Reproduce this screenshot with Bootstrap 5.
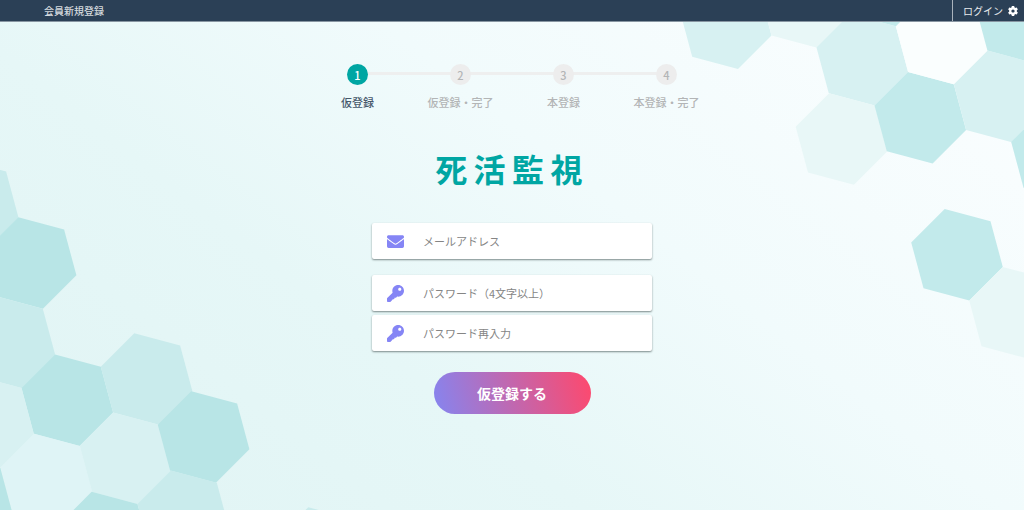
<!DOCTYPE html>
<html lang="ja">
<head>
<meta charset="utf-8">
<meta name="viewport" content="width=device-width, initial-scale=1">
<title>会員新規登録 | 死活監視</title>
<link href="https://cdn.jsdelivr.net/npm/bootstrap@5.3.0/dist/css/bootstrap.min.css" rel="stylesheet">
<style>
  :root { --teal: #00a6a3; --navy: #2b4056; --violet: #8585f5; }
  body {
    font-family: "Noto Sans CJK JP", sans-serif;
    font-size: 11px;
    line-height: 16px;
    background: linear-gradient(38deg, #e0f4f4 0%, #e6f7f7 35%, #f1fbfc 60%, #fcfeff 100%) #f1fbfc;
  }
  .topbar { background: var(--navy); border-bottom: 1px solid #8896a2; font-size: 10px; height: 22px; }
  .topbar h1 { font-size: 10px; line-height: 22px; padding-left: 44px; color: #d5dade; }
  .login-link { color: #e8ebee; border-left: 1px solid #aab3bc; padding: 0 6px 0 10px; gap: 5px; }
  .honeycomb { pointer-events: none; }
  .tone-a { fill: #b8e5e6; } .tone-b { fill: #c9ebec; } .tone-c { fill: #d8f1f2; } .tone-d { fill: #dff4f6; }
  .tone-e { fill: #c2eaeb; } .tone-f { fill: #d7f1f2; } .tone-g { fill: #e8f7f7; } .tone-h { fill: #fafefe; }
  .steps { max-width: 412px; padding-top: 42px; color: #b3b5b6; font-weight: 500; }
  .steps li { flex: 1 1 0; }
  .steps li + li::before {
    content: ""; position: absolute; top: 8px; right: 50%; width: 100%; height: 3px; background: #eeefef; z-index: -1;
  }
  .step-dot { width: 21px; height: 21px; background: #ededed; line-height: 22px; margin-bottom: 9px; }
  .steps .current .step-dot { background: var(--teal); color: #fff; }
  .steps .current { color: #46586b; }
  .brand-title { font-size: 32px; line-height: 40px; letter-spacing: .2em; color: var(--teal); padding-top: 38px; margin-bottom: 35px; }
  .signup { max-width: 280px; }
  .field { height: 36px; border-radius: 2px; box-shadow: 0 1px 2px #7b8a8a; padding-left: 15px; background: #fff; }
  .field svg { fill: var(--violet); flex: none; }
  .field .form-control { font-size: 11px; line-height: 16px; padding: 0 8px 0 19px; color: #444; }
  .field .form-control::placeholder { color: #858585; }
  .btn-signup {
    width: 157px; height: 42px; font-size: 14px; color: #fff; margin-top: 21px;
    background: linear-gradient(75deg, #8585f0, #ff486c);
  }
  .btn-signup:hover { color: #fff; filter: brightness(1.05); }
</style>
</head>
<body class="min-vh-100 position-relative overflow-x-hidden">
<svg width="0" height="0" class="position-absolute" aria-hidden="true">
  <defs><path id="hex" d="M-12.3-45.8 33.5-33.5 45.8 12.3 12.3 45.8-33.5 33.5-45.8-12.3z"/></defs>
</svg>
<svg class="honeycomb position-absolute bottom-0 start-0" width="360" height="340" viewBox="0 170 360 340" aria-hidden="true">
  <use href="#hex" class="tone-b" x="-27.4" y="205"/>
  <use href="#hex" class="tone-a" x="30.6" y="263"/>
  <use href="#hex" class="tone-b" x="9.3" y="342.3"/>
  <use href="#hex" class="tone-a" x="67.3" y="400.3"/>
  <use href="#hex" class="tone-b" x="146.6" y="379"/>
  <use href="#hex" class="tone-c" x="-12" y="421.6"/>
  <use href="#hex" class="tone-c" x="125.3" y="458.3"/>
  <use href="#hex" class="tone-a" x="203.6" y="437"/>
  <use href="#hex" class="tone-d" x="46.5" y="479.6"/>
  <use href="#hex" class="tone-a" x="-33.3" y="501"/>
  <use href="#hex" class="tone-a" x="104" y="537.6"/>
  <use href="#hex" class="tone-b" x="183.3" y="516.3"/>
  <use href="#hex" class="tone-b" x="320.6" y="553"/>
</svg>
<svg class="honeycomb position-absolute top-0 end-0" width="350" height="370" viewBox="674 0 350 370" aria-hidden="true">
  <use href="#hex" class="tone-f" x="725.7" y="23.3"/>
  <use href="#hex" class="tone-g" x="805" y="2"/>
  <use href="#hex" class="tone-f" x="862.3" y="59.7"/>
  <use href="#hex" class="tone-g" x="841.5" y="139"/>
  <use href="#hex" class="tone-e" x="920.3" y="117.7"/>
  <use href="#hex" class="tone-f" x="999.6" y="96.4"/>
  <use href="#hex" class="tone-h" x="941.6" y="38.4"/>
  <use href="#hex" class="tone-e" x="883.6" y="-19.6"/>
  <use href="#hex" class="tone-e" x="1020.9" y="17.1"/>
  <use href="#hex" class="tone-e" x="1057" y="154.3"/>
  <use href="#hex" class="tone-e" x="957" y="254.7"/>
  <use href="#hex" class="tone-g" x="1015" y="312.7"/>
</svg>

<header class="topbar d-flex justify-content-between align-items-stretch position-relative">
  <h1 class="m-0 fw-medium">会員新規登録</h1>
  <a href="#login" class="login-link d-flex align-items-center text-decoration-none">ログイン
    <svg width="10" height="10" viewBox="8 8 496 496" fill="#fff" aria-hidden="true"><path d="M487.4 315.7l-42.6-24.6c4.3-23.2 4.3-47 0-70.2l42.6-24.6c4.9-2.8 7.1-8.6 5.500-14-11.100-35.600-30-67.800-54.700-94.600-3.800-4.100-10-5.100-14.800-2.300L380.800 110c-17.900-15.400-38.500-27.300-60.800-35.100V25.800c0-5.600-3.900-10.500-9.400-11.700-36.700-8.200-74.300-7.800-109.200 0-5.500 1.200-9.400 6.100-9.400 11.700V75c-22.200 7.900-42.800 19.800-60.800 35.100L88.700 85.500c-4.900-2.800-11-1.900-14.800 2.300-24.700 26.700-43.600 58.900-54.700 94.600-1.700 5.400.6 11.200 5.500 14L67.300 221c-4.300 23.200-4.300 47 0 70.200l-42.600 24.600c-4.900 2.800-7.100 8.600-5.500 14 11.100 35.600 30 67.800 54.700 94.600 3.800 4.100 10 5.100 14.800 2.300l42.600-24.600c17.900 15.400 38.500 27.300 60.800 35.100v49.200c0 5.600 3.900 10.500 9.400 11.700 36.700 8.200 74.300 7.800 109.200 0 5.500-1.200 9.400-6.100 9.400-11.700v-49.200c22.200-7.900 42.800-19.800 60.800-35.100l42.600 24.600c4.900 2.800 11 1.900 14.800-2.300 24.700-26.700 43.600-58.900 54.700-94.600 1.500-5.500-.7-11.300-5.600-14.100zM256 336c-44.100 0-80-35.900-80-80s35.900-80 80-80 80 35.900 80 80-35.900 80-80 80z"/></svg>
  </a>
</header>

<main class="position-relative z-1 text-center">
  <ol class="steps list-unstyled d-flex mx-auto mb-0">
    <li class="current position-relative" aria-current="step"><div class="step-dot rounded-circle mx-auto">1</div>仮登録</li>
    <li class="position-relative"><div class="step-dot rounded-circle mx-auto">2</div>仮登録・完了</li>
    <li class="position-relative"><div class="step-dot rounded-circle mx-auto">3</div>本登録</li>
    <li class="position-relative"><div class="step-dot rounded-circle mx-auto">4</div>本登録・完了</li>
  </ol>

  <h2 class="brand-title fw-bold">死活監視</h2>

  <form class="signup mx-auto" onsubmit="return false">
    <label class="field d-flex align-items-center mb-3" for="mail">
      <svg width="17" height="17" viewBox="0 0 512 512" aria-hidden="true"><path d="M502.3 190.8c3.9-3.1 9.7-.2 9.7 4.7V400c0 26.5-21.5 48-48 48H48c-26.5 0-48-21.5-48-48V195.6c0-5 5.7-7.8 9.7-4.7 22.4 17.4 52.1 39.5 154.1 113.6 21.1 15.4 56.7 47.8 92.2 47.6 35.7.3 72-32.8 92.3-47.6 102-74.1 131.6-96.3 154-113.7zM256 320c23.2.4 56.6-29.2 73.4-41.4 132.7-96.3 142.8-104.7 173.4-128.7 5.8-4.5 9.2-11.5 9.2-18.9v-19c0-26.5-21.5-48-48-48H48c-26.5 0-48 21.5-48 48v19c0 7.400 3.400 14.300 9.200 18.900 30.600 23.900 40.700 32.400 173.400 128.700 16.800 12.200 50.200 41.800 73.400 41.400z"/></svg>
      <input id="mail" type="email" class="form-control border-0 bg-transparent shadow-none" placeholder="メールアドレス" aria-label="メールアドレス">
    </label>
    <label class="field d-flex align-items-center mb-1" for="pass">
      <svg width="17" height="17" viewBox="0 0 512 512" aria-hidden="true"><path id="key" d="M512 176c0 97.200-78.800 176-176 176-11.200 0-22.200-1.100-32.800-3.100l-24 27a24 24 0 0 1-18 8.100H224v24c0 13.300-10.700 24-24 24h-24l-60 68c-6 8-12 12-20 12H24c-13.300 0-24-10.700-24-24v-78c0-6.400 2.500-12.500 7-17l161.800-161.800C163.100 213.800 160 195.300 160 176 160 78.800 238.800 0 336 0c97.500 0 176 78.500 176 176zM336 128c0 26.500 21.500 48 48 48s48-21.500 48-48-21.500-48-48-48-48 21.500-48 48z"/></svg>
      <input id="pass" type="password" class="form-control border-0 bg-transparent shadow-none" placeholder="パスワード（4文字以上）" aria-label="パスワード（4文字以上）">
    </label>
    <label class="field d-flex align-items-center" for="pass2">
      <svg width="17" height="17" viewBox="0 0 512 512" aria-hidden="true"><use href="#key"/></svg>
      <input id="pass2" type="password" class="form-control border-0 bg-transparent shadow-none" placeholder="パスワード再入力" aria-label="パスワード再入力">
    </label>
    <button type="submit" class="btn btn-signup rounded-pill border-0 fw-bold p-0">仮登録する</button>
  </form>
</main>
<script src="https://cdn.jsdelivr.net/npm/bootstrap@5.3.0/dist/js/bootstrap.bundle.min.js"></script>
</body>
</html>
